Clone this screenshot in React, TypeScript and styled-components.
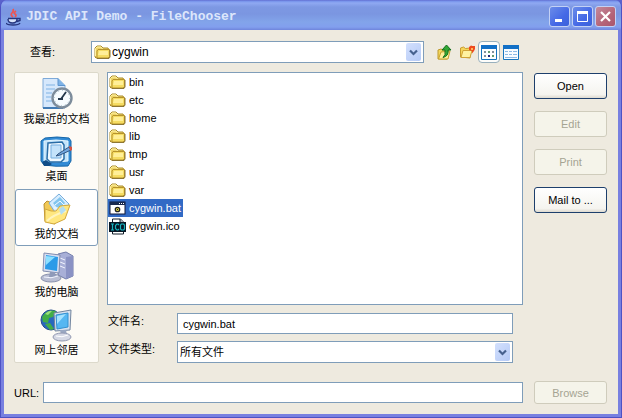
import React, { useState } from "react";
import styled, { createGlobalStyle, css } from "styled-components";

const GlobalStyle = createGlobalStyle`
  *, *::before, *::after { box-sizing: border-box; }
  body { margin: 0; background: #5a62cc; }
  body, button, input, select {
    font-family: "Liberation Sans", Arial, "Noto Sans CJK SC", sans-serif;
    font-size: 11px;
    line-height: 16px;
    color: #000;
  }
  button { padding: 0; cursor: default; }
`;

const edge = "#7f9db9";

const Frame = styled.div`
  min-height: 100vh;
  display: flex;
  flex-direction: column;
  border: solid #4d52c4;
  border-width: 0 1px 1px;
  border-radius: 7px 7px 0 0;
  background: #7880e0;
  overflow: hidden;
`;

const TitleBar = styled.header`
  height: 30px;
  display: flex;
  align-items: center;
  gap: 4px;
  padding: 3px 5px 0;
  background: linear-gradient(
    #6068cc 0, #7591ea 1px, #8fa9f2 3px, #7d98e3 7px,
    #7b96e1 14px, #82a4ea 22px, #829fee 27px, #6f85dc 30px
  );
`;

const Title = styled.h1`
  flex: 1;
  margin: 0;
  font: bold 13px/18px "Liberation Mono", monospace;
  color: #dce6fb;
  white-space: nowrap;
`;

const Controls = styled.div`
  display: flex;
  gap: 2px;
`;

const ControlButton = styled.button<{ $close?: boolean }>`
  width: 21px;
  height: 21px;
  display: grid;
  place-items: center;
  border: 1px solid #c3d1f5;
  border-radius: 3px;
  background: ${(p) =>
    p.$close
      ? "linear-gradient(135deg, #c38a9c, #b56478 60%, #a9566c)"
      : "linear-gradient(135deg, #6b8ce9, #4468e6 60%, #3c62da)"};
`;

const Client = styled.main`
  flex: 1;
  display: flex;
  flex-direction: column;
  margin: 0 3px 3px;
  padding: 11px 11px 10px 10px;
  background: #eeeadf;
`;

const LookInRow = styled.div`
  display: flex;
  align-items: center;
  gap: 10px;
  padding: 0 85px 0 16px;
`;

const LookInLabel = styled.label`
  width: 51px;
`;

const ComboWrap = styled.div`
  flex: 1;
  display: grid;
  align-items: center;
  grid-template-columns: 20px 1fr 18px;
  height: 22px;
  padding: 0 2px;
  border: 1px solid ${edge};
  background: #fff;
`;

const Combo = styled.select<{ $icon?: boolean }>`
  grid-area: 1 / 1 / 2 / 4;
  width: 100%;
  height: 20px;
  padding: 0 18px 0 ${(p) => (p.$icon ? "18px" : "0")};
  border: 0;
  appearance: none;
  background: transparent;
  font-size: ${(p) => (p.$icon ? "12px" : "11px")};
  outline: 0;
`;

const ComboIcon = styled.span`
  grid-area: 1 / 1;
  display: flex;
  pointer-events: none;
`;

const ComboArrow = styled.span`
  grid-area: 1 / 3;
  justify-self: end;
  width: 15px;
  height: 18px;
  display: grid;
  place-items: center;
  border-radius: 2px;
  background: linear-gradient(135deg, #d3e0fd, #b5caf6);
  pointer-events: none;
`;

const Tools = styled.div`
  display: flex;
  align-items: center;
`;

const ToolButton = styled.button<{ $on?: boolean }>`
  width: 22px;
  height: 22px;
  display: grid;
  place-items: center;
  border: 1px solid ${(p) => (p.$on ? "#98b0bd" : "transparent")};
  border-radius: 4px;
  background: ${(p) => (p.$on ? "#fdfdfb" : "transparent")};
`;

const Middle = styled.div`
  flex: 1;
  display: flex;
  margin-top: 9px;
`;

const Places = styled.nav`
  width: 85px;
  margin-right: 8px;
  align-self: stretch;
  display: flex;
  flex-direction: column;
  border: 1px solid #dcd9cb;
  border-radius: 2px;
  background: #fdfbf6;
`;

const Place = styled.button<{ $on?: boolean }>`
  flex: 1;
  min-height: 57px;
  display: flex;
  flex-direction: column;
  align-items: center;
  justify-content: center;
  border: 1px solid ${(p) => (p.$on ? edge : "transparent")};
  border-radius: 3px;
  background: ${(p) => (p.$on ? "#fff" : "transparent")};
  white-space: nowrap;
`;

const Files = styled.div`
  flex: 1;
  min-width: 0;
  display: flex;
  flex-direction: column;
`;

const FileList = styled.ul`
  flex: 1;
  margin: 0;
  padding: 0;
  list-style: none;
  border: 1px solid ${edge};
  background: #fff;
`;

const FileItem = styled.li`
  display: flex;
  height: 18px;
`;

const FileButton = styled.button<{ $on: boolean }>`
  display: flex;
  align-items: center;
  gap: 3px;
  padding: 0 2px 0 1px;
  border: 0;
  background: transparent;
  ${(p) =>
    p.$on &&
    css`
      background: #316ac5;
      color: #fff;
    `}
`;

const Fields = styled.div`
  display: grid;
  grid-template-columns: 69px 1fr;
  align-items: start;
  row-gap: 7px;
  padding: 8px 10px 0 1px;
`;

const TextInput = styled.input`
  width: 100%;
  min-width: 0;
  height: 21px;
  padding: 0 5px;
  border: 1px solid ${edge};
  background: #fff;
  outline: 0;
`;

const Actions = styled.div`
  width: 73px;
  margin-left: 11px;
  padding-top: 1px;
  display: flex;
  flex-direction: column;
  gap: 12px;
`;

const ActionButton = styled.button`
  width: 73px;
  height: 26px;
  border: 1px solid #1d3f6c;
  border-radius: 3px;
  background: linear-gradient(#fff, #f5f4ef 85%, #dedad0);
  &:disabled {
    border-color: #cfccbc;
    background: #f5f4ea;
    color: #a5a493;
  }
`;

const BrowseButton = styled(ActionButton)`
  height: 23px;
  margin-left: 11px;
`;

const UrlRow = styled.div`
  display: flex;
  align-items: center;
  margin-top: 18px;
`;

const UrlLabel = styled.label`
  width: 29px;
`;

const UrlInput = styled(TextInput)`
  flex: 1;
  width: 0;
`;

const JavaCup = () => (
  <svg width="16" height="18" viewBox="0 0 16 18" fill="none" aria-hidden="true">
    <path d="M7 9Q4 7 6 5T7 1M9 9Q11 7 9 6T10 3" stroke="#ee5550" strokeWidth="1.7" />
    <path d="M2 10h9v3q-1 2-4.500 2T2 13z" fill="#d8e3fa" />
    <path d="M2 10.500h9M2 11q0 4 4.500 4T11 11M11 10.500h3v2l-3 1M0 15q1 2 7 2t7-2" stroke="#26357e" strokeWidth="1.400" />
  </svg>
);

const Folder = () => (
  <svg width="17" height="14" viewBox="0 0 17 14" aria-hidden="true">
    <path d="M1 12V3l2-2h4l2 2h5l1 2v8H2z" fill="#efd567" stroke="#a98b2b" />
    <path d="M1.500 11V3.500L3 2h4l1.500 2" fill="none" stroke="#fff2a7" />
    <path d="M4 4.500h11.500v7L14 13H3V6z" fill="#f5dc62" stroke="#b6932c" />
    <path d="M5 6h9v4H4z" fill="#ffef98" />
    <path d="M16 5v7l-1 1.500H3" fill="none" stroke="#8e7734" />
  </svg>
);

const BatIcon = () => (
  <svg width="17" height="14" viewBox="0 0 17 14" aria-hidden="true">
    <rect x="1" y="1" width="15" height="12" fill="#fff" stroke="#101838" />
    <path d="M1 1h15v3H1z" fill="#17284d" />
    <path d="M10 2.500h1m1 0h1m1 0h1" stroke="#fff" />
    <circle cx="8.500" cy="8.500" r="2.200" fill="#e0d340" stroke="#222" strokeWidth="1.300" />
    <path d="M8 8h1v1H8z" fill="#222" />
  </svg>
);

const IcoIcon = () => (
  <svg width="17" height="17" viewBox="0 0 17 17" aria-hidden="true">
    <path d="M3.500 16V1h8l3 3v12z" fill="#fff" stroke="#111c28" />
    <path d="M11 1v4h4" fill="#a8b5bc" stroke="#111c28" />
    <path d="M0 4h17v10H0z" fill="#061725" />
    <path d="M2 6h3M3.500 6v6M2 12h3M10 7l-1-1H8L6.500 7.500v3L8 12h1l1-1M12.500 6h2l1 1v4l-1 1h-2l-1-1V7z" fill="none" stroke="#16b2bd" strokeWidth="1.200" />
  </svg>
);

const Chevron = () => (
  <svg width="9" height="7" viewBox="0 0 9 7" aria-hidden="true">
    <path d="M1 1.500l3.500 3.500L8 1.500" fill="none" stroke="#46618e" strokeWidth="2.200" />
  </svg>
);

const UpFolder = () => (
  <svg width="16" height="17" viewBox="0 0 16 17" aria-hidden="true">
    <path d="M1 15V6l3-1 2 1 5-1 1 3-2 7z" fill="#f4d75c" stroke="#bd992d" />
    <path d="M1.500 15L4 8l9-1-2 8z" fill="#fff09a" stroke="#c7a12f" />
    <path d="M6 13.500q3-2 2-7.500H5L9.500 1 14 6h-3q1 6-5 7.500z" fill="#31a735" stroke="#126f1b" />
  </svg>
);

const NewFolder = () => (
  <svg width="17" height="16" viewBox="0 0 17 16" aria-hidden="true">
    <path d="M1.500 13V4l3-1 2 1.500L11 4l1 3-1 7z" fill="#f5d65b" stroke="#c89c2d" />
    <path d="M2 13.500l2-7h9l-2 7z" fill="#fff2a0" stroke="#d0a337" />
    <path d="M10 3l2-1.500L13.500 2 16 2v3l-1 2-2 2.500V7l-3-1z" fill="#ee4b1e" />
    <path d="M12 4h2v2h-2z" fill="#ffb65a" />
  </svg>
);

const GridIcon = () => (
  <svg width="16" height="15" viewBox="0 0 16 15" aria-hidden="true">
    <path d="M.5.5h15v14H.5z" fill="#fff" stroke="#1674bd" />
    <path d="M0 0h16v4H0z" fill="#1270c6" />
    <path d="M3 6h2v2H3zm8 0h2v2h-2zM3 10h2v2H3z" fill="#82909d" />
    <path d="M7 6h2v2H7zm4 4h2v2h-2z" fill="#659b71" />
    <path d="M7 10h2v2H7z" fill="#22277b" />
  </svg>
);

const DetailsIcon = () => (
  <svg width="16" height="15" viewBox="0 0 16 15" aria-hidden="true">
    <path d="M.5.5h15v14H.5z" fill="#f7fbff" stroke="#1674bd" />
    <path d="M0 0h16v4H0z" fill="#1270c6" />
    <path d="M2 6.500h12M2 9.500h12M2 12.500h12" stroke="#8cb9e5" />
    <path d="M5 6.500h1m3 0h1m-5 3h1m3 0h1" stroke="#fff" />
  </svg>
);

const RecentIcon = () => (
  <svg width="32" height="34" viewBox="0 0 32 34" aria-hidden="true">
    <path d="M2 1.500h15l7 7V31H2z" fill="#d6e8fc" stroke="#7eaad9" />
    <path d="M17 1.500v7h7" fill="#7fb3e7" stroke="#5c94ce" />
    <path d="M5 8h9M5 12h9M5 16h6M5 20h5M5 24h6" stroke="#9cc3ec" strokeWidth="1.500" />
    <path d="M2 31h20" stroke="#427bb5" strokeWidth="2" />
    <circle cx="21" cy="21" r="9.500" fill="#f7fcff" stroke="#7d8c9b" strokeWidth="2.400" />
    <circle cx="21" cy="21" r="7.500" fill="none" stroke="#abc2d0" strokeDasharray="1 2.900" />
    <path d="M25 15l-5 7M17 22h5" stroke="#24384c" strokeWidth="1.800" />
  </svg>
);

const DesktopIcon = () => (
  <svg width="33" height="32" viewBox="0 0 33 32" aria-hidden="true">
    <path d="M1 5l4-3q12-2 24 0l2 3v20l-3 5q-12 1-24-1l-3-4z" fill="#328bd5" stroke="#1767a8" />
    <path d="M4 5q12-2 24 0v20q-12 2-24 0z" fill="#c2e3fa" stroke="#e4f6ff" />
    <path d="M2 26l4-2 6 4-3 2H4z" fill="#114c86" />
    <path d="M8 7l14-1 2 3v14l-3 3H10l-3-3z" fill="#eff8ff" stroke="#286ca6" strokeWidth="1.500" />
    <path d="M11 9h10v13H11z" fill="#c4e3fb" stroke="#77afe0" />
    <path d="M18 18l11-7 2 3-11 5-4 1z" fill="#71a7df" stroke="#345783" />
    <path d="M29 10l3 1v3l-2 1z" fill="#d65443" />
  </svg>
);

const DocumentsIcon = () => (
  <svg width="32" height="34" viewBox="0 0 32 34" aria-hidden="true">
    <path d="M3 12l3-3 5 2 3 5V32L4 29z" fill="#f1c956" stroke="#b98e2e" />
    <path d="M8 11L18 2l10 10-11 13z" fill="#d6edff" stroke="#77addb" />
    <path d="M12 11l7-6 5 6-6 7z" fill="#82c5ee" />
    <path d="M14 13l5-4 4 4M13 16h10" fill="none" stroke="#f4faff" />
    <path d="M4 30V17q7 3 11 2l4-5 10-1-5 14-11 5z" fill="#ffe77f" stroke="#d3a93e" />
    <path d="M6 29q6-6 19-10" stroke="#fff4bd" strokeWidth="2" fill="none" />
    <path d="M18 17l4-3 3 4-5 5z" fill="#b3ddf1" />
  </svg>
);

const ComputerIcon = () => (
  <svg width="34" height="34" viewBox="0 0 34 34" aria-hidden="true">
    <path d="M18 4l8-2 7 4v20l-7 3-8-4z" fill="#a8afd7" stroke="#707ba9" />
    <path d="M26 7l7-1v20l-7 3z" fill="#8a92c4" />
    <path d="M20 8l5 2m-5 2l5 2m-5 2l5 2" stroke="#f3f5ff" />
    <path d="M4 3l16 2-1 18-16-2z" fill="#d8def0" stroke="#818cae" />
    <path d="M6 5l12 2-1 14-12-2z" fill="#2c9be8" />
    <path d="M6 6l9 1-9 8z" fill="#8de0ff" />
    <ellipse cx="11" cy="28" rx="10" ry="4" fill="#b9bed3" stroke="#8991ac" />
    <path d="M10 22h5l1 5H9z" fill="#8f9ab9" />
    <path d="M4 27q7 2 14-1" stroke="#f3f5ff" fill="none" />
  </svg>
);

const NetworkIcon = () => (
  <svg width="33" height="34" viewBox="0 0 33 34" aria-hidden="true">
    <circle cx="11" cy="12" r="10" fill="#2868bd" stroke="#244c8c" />
    <path d="M2 9Q7 1 16 3l-3 6-4 1-1 5-5-1zM5 16l5-1 4 6-4 1z" fill="#43ad48" />
    <path d="M5 6q4-4 7-3L8 7z" fill="#9ddf79" />
    <path d="M14 5l17-3-1 20-15 1z" fill="#d8e2ef" stroke="#72859f" />
    <path d="M16 7l12-2v14l-11 2z" fill="#55b7f2" stroke="#3390d0" />
    <path d="M17 8l9-2-9 10z" fill="#a6e3ff" />
    <path d="M20 22h6l1 5h-6z" fill="#9aa8c2" />
    <ellipse cx="22" cy="29" rx="9" ry="4" fill="#d6d9e5" stroke="#9198b1" />
    <path d="M16 28q6 2 12-1" stroke="#fff" fill="none" />
  </svg>
);

const places = [
  { name: "我最近的文档", Icon: RecentIcon },
  { name: "桌面", Icon: DesktopIcon },
  { name: "我的文档", Icon: DocumentsIcon },
  { name: "我的电脑", Icon: ComputerIcon },
  { name: "网上邻居", Icon: NetworkIcon },
];

const files = [
  { name: "bin", Icon: Folder },
  { name: "etc", Icon: Folder },
  { name: "home", Icon: Folder },
  { name: "lib", Icon: Folder },
  { name: "tmp", Icon: Folder },
  { name: "usr", Icon: Folder },
  { name: "var", Icon: Folder },
  { name: "cygwin.bat", Icon: BatIcon },
  { name: "cygwin.ico", Icon: IcoIcon },
];

export default function App() {
  const [place, setPlace] = useState("我的文档");
  const [file, setFile] = useState("cygwin.bat");
  const [details, setDetails] = useState(false);
  const [url, setUrl] = useState("");

  return (
    <>
      <GlobalStyle />
      <Frame>
        <TitleBar>
          <JavaCup />
          <Title>JDIC API Demo - FileChooser</Title>
          <Controls>
            <ControlButton aria-label="Minimize">
              <svg width="13" height="13"><path d="M2 9h7v3H2z" fill="#fff" /></svg>
            </ControlButton>
            <ControlButton aria-label="Maximize">
              <svg width="13" height="13"><path d="M1.500 2v9.500h10V2" fill="none" stroke="#fff" /><path d="M1 1h11v3H1z" fill="#fff" /></svg>
            </ControlButton>
            <ControlButton aria-label="Close" $close>
              <svg width="13" height="13"><path d="M2 2l9 9m0-9l-9 9" stroke="#fff" strokeWidth="2.200" /></svg>
            </ControlButton>
          </Controls>
        </TitleBar>
        <Client>
          <LookInRow>
            <LookInLabel htmlFor="look-in">查看:</LookInLabel>
            <ComboWrap>
              <ComboIcon><Folder /></ComboIcon>
              <Combo id="look-in" $icon><option>cygwin</option></Combo>
              <ComboArrow><Chevron /></ComboArrow>
            </ComboWrap>
            <Tools>
              <ToolButton aria-label="Up one level"><UpFolder /></ToolButton>
              <ToolButton aria-label="New folder"><NewFolder /></ToolButton>
              <ToolButton aria-label="List" $on={!details} onClick={() => setDetails(false)}><GridIcon /></ToolButton>
              <ToolButton aria-label="Details" $on={details} onClick={() => setDetails(true)}><DetailsIcon /></ToolButton>
            </Tools>
          </LookInRow>
          <Middle>
            <Places>
              {places.map(({ name, Icon }) => (
                <Place key={name} $on={name === place} onClick={() => setPlace(name)}>
                  <Icon />
                  {name}
                </Place>
              ))}
            </Places>
            <Files>
              <FileList>
                {files.map(({ name, Icon }) => (
                  <FileItem key={name}>
                    <FileButton $on={name === file} onClick={() => setFile(name)}>
                      <Icon />
                      {name}
                    </FileButton>
                  </FileItem>
                ))}
              </FileList>
              <Fields>
                <label htmlFor="file-name">文件名:</label>
                <TextInput id="file-name" value={file} onChange={(e) => setFile(e.target.value)} />
                <label htmlFor="file-type">文件类型:</label>
                <ComboWrap>
                  <Combo id="file-type"><option>所有文件</option></Combo>
                  <ComboArrow><Chevron /></ComboArrow>
                </ComboWrap>
              </Fields>
            </Files>
            <Actions>
              <ActionButton>Open</ActionButton>
              <ActionButton disabled>Edit</ActionButton>
              <ActionButton disabled>Print</ActionButton>
              <ActionButton>Mail to ...</ActionButton>
            </Actions>
          </Middle>
          <UrlRow>
            <UrlLabel htmlFor="url">URL:</UrlLabel>
            <UrlInput id="url" value={url} onChange={(e) => setUrl(e.target.value)} />
            <BrowseButton disabled>Browse</BrowseButton>
          </UrlRow>
        </Client>
      </Frame>
    </>
  );
}
